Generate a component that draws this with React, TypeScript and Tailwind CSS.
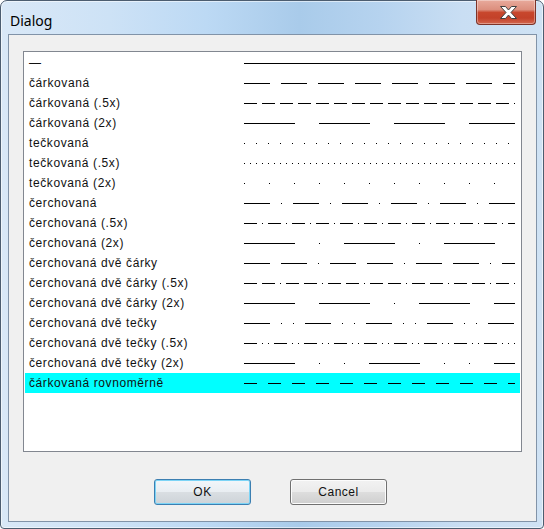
import React from 'react';

// line style names with their dash patterns (px, drawn at stroke 1)
const lineStyles = [
  { name: '—', dash: '' },
  { name: 'čárkovaná', dash: '26 11' },
  { name: 'čárkovaná (.5x)', dash: '13 5' },
  { name: 'čárkovaná (2x)', dash: '51 24' },
  { name: 'tečkovaná', dash: '1 11' },
  { name: 'tečkovaná (.5x)', dash: '1 5' },
  { name: 'tečkovaná (2x)', dash: '1 24' },
  { name: 'čerchovaná', dash: '26 11 1 11' },
  { name: 'čerchovaná (.5x)', dash: '13 5 1 5' },
  { name: 'čerchovaná (2x)', dash: '51 24 1 24' },
  { name: 'čerchovaná dvě čárky', dash: '26 11 26 11 1 11' },
  { name: 'čerchovaná dvě čárky (.5x)', dash: '13 5 13 5 1 5' },
  { name: 'čerchovaná dvě čárky (2x)', dash: '51 24 51 24 1 24' },
  { name: 'čerchovaná dvě tečky', dash: '26 11 1 11 1 11' },
  { name: 'čerchovaná dvě tečky (.5x)', dash: '13 5 1 5 1 5' },
  { name: 'čerchovaná dvě tečky (2x)', dash: '51 24 1 24 1 24' },
  { name: 'čárkovaná rovnoměrně', dash: '13 11' },
];

const selected = 16;

function LinePreview({ dash }: { dash: string }) {
  return (
    <svg width="271" height="20" className="block shrink-0" shapeRendering="crispEdges">
      <line x1="0" y1="10.5" x2="271" y2="10.5" stroke="#000" strokeWidth="1" strokeDasharray={dash || undefined} />
    </svg>
  );
}

function CloseButton() {
  return (
    <div className="absolute left-[475px] top-[-1px] flex h-[25px] w-[60px] items-center justify-center rounded-b-[4px] border border-t-0 border-[#7d3328] bg-[linear-gradient(180deg,#e8aa9c_0%,#dc8f7e_40%,#c8472d_52%,#c34129_75%,#d3674f_100%)] shadow-[inset_0_0_0_1px_rgba(255,255,255,0.35)]">
      <svg width="17" height="13" viewBox="0 0 17 13" className="mt-[1px] ml-[4px]">
        <polygon
          points="0.5,0.5 5.5,0.5 8.5,4 11.5,0.5 16.5,0.5 11,6.5 16.5,12.5 11.5,12.5 8.5,9 5.5,12.5 0.5,12.5 6,6.5"
          fill="#ffffff"
          stroke="#3f3f3f"
          strokeWidth="1"
          strokeLinejoin="round"
        />
      </svg>
    </div>
  );
}

function DialogButton({ label, isDefault }: { label: string; isDefault?: boolean }) {
  return (
    <button
      className={
        isDefault
          ? 'flex h-[26px] w-[97px] items-center justify-center rounded-[3px] border border-[#3c7fb1] bg-[linear-gradient(180deg,#f1f6fa_0%,#e9eef2_48%,#d9dee2_52%,#cdd3d8_100%)] text-[12px] tracking-[0.5px] text-[#111] shadow-[inset_0_0_0_1px_#7cd4f6]'
          : 'flex h-[26px] w-[97px] items-center justify-center rounded-[3px] border border-[#707070] bg-[linear-gradient(180deg,#f2f2f2_0%,#ebebeb_48%,#dddddd_52%,#cfcfcf_100%)] text-[12px] tracking-[0.5px] text-[#111] shadow-[inset_0_0_0_1px_#fcfcfc]'
      }
      style={{ fontFamily: '"Liberation Sans", Arial, sans-serif' }}
    >
      {label}
    </button>
  );
}

export default function App() {
  return (
    <div className="h-[529px] w-[544px] bg-white">
      <div className="relative flex h-full w-full flex-col rounded-t-[7px] rounded-b-[4px] border border-[#4c5d70] bg-[linear-gradient(90deg,#d9e8f7_0%,#cde2f6_20%,#bcd9f4_38%,#a9cbea_55%,#b6d3ef_70%,#c9def3_85%,#cfe2f4_100%)] pl-[7px] pr-[6px] pb-[6px] shadow-[inset_0_0_0_1px_rgba(255,255,255,0.55)]">
        <div className="h-[33px] shrink-0 pl-[2px] pt-[7px]">
          <span className="text-[14px] leading-[20px] text-black" style={{ fontFamily: '"Noto Sans", "Open Sans", sans-serif' }}>
            Dialog
          </span>
        </div>
        <CloseButton />

        <div
          className="flex h-[488px] w-[529px] flex-col border border-[#8193a8] bg-[#f0f0f0]"
          style={{ fontFamily: '"Liberation Sans", Arial, sans-serif' }}
        >
          <div className="ml-[14px] mt-[16px] h-[401px] w-[499px] border border-[#828790] bg-white p-[1px]">
            {lineStyles.map((s, i) => (
              <div
                key={s.name}
                className={`flex h-[20px] items-center ${i === selected ? 'bg-[#00ffff]' : ''}`}
              >
                <span className="w-[219px] shrink-0 pl-[4px] text-[12px] leading-[20px] tracking-[0.6px] text-[#111]">
                  {s.name}
                </span>
                <LinePreview dash={s.dash} />
              </div>
            ))}
          </div>

          <div className="mt-[27px] flex gap-[39px] pl-[145px]">
            <DialogButton label="OK" isDefault />
            <DialogButton label="Cancel" />
          </div>
        </div>
      </div>
    </div>
  );
}
